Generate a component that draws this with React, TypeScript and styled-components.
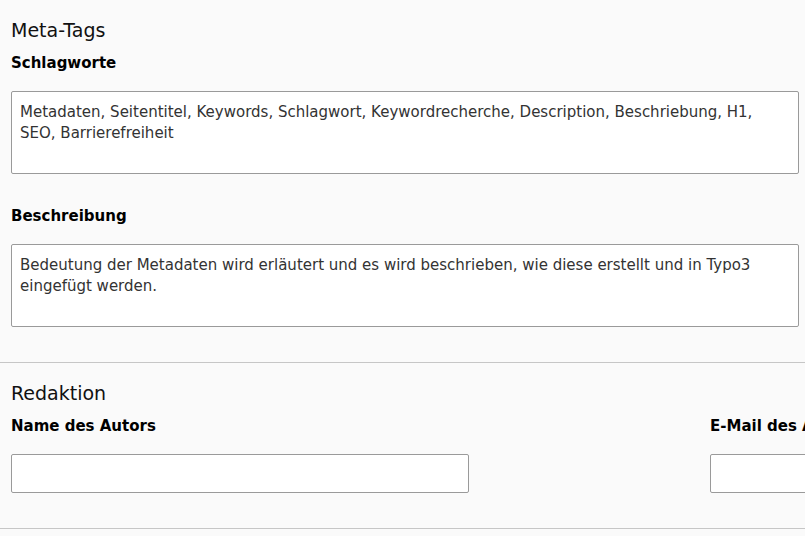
import React from 'react';
import styled, { createGlobalStyle } from 'styled-components';

const GlobalStyle = createGlobalStyle`
  html, body {
    margin: 0;
    padding: 0;
    background: #fafafa;
    overflow: hidden;
  }
  body {
    font-family: 'DejaVu Sans', Verdana, sans-serif;
    color: #000;
  }
`;

const Page = styled.div`
  width: 805px;
  height: 536px;
  background: #fafafa;
  overflow: hidden;
`;

const Section = styled.section`
  display: flex;
  flex-direction: column;
  padding: 19px 0 35px 11px;
  border-bottom: 1px solid #c6c6c6;
`;

const SectionTitle = styled.h2`
  margin: 0 0 12px 0;
  font-size: 19px;
  line-height: 22px;
  font-weight: 400;
  color: #111;
`;

const FieldList = styled.div`
  display: flex;
  flex-direction: column;
  gap: 32px;
`;

const FieldRow = styled.div`
  display: flex;
  flex-wrap: nowrap;
`;

const Field = styled.div<{ $width?: number }>`
  display: flex;
  flex-direction: column;
  flex-shrink: 0;
  width: ${(p) => (p.$width ? `${p.$width}px` : 'auto')};
`;

const Label = styled.label`
  display: block;
  margin-bottom: 17px;
  font-size: 15px;
  line-height: 21px;
  font-weight: 700;
  color: #000;
  white-space: nowrap;
`;

const TextArea = styled.textarea`
  box-sizing: border-box;
  width: 788px;
  height: 83px;
  padding: 10px 8px 8px 8px;
  margin: 0;
  font-family: 'DejaVu Sans', Verdana, sans-serif;
  font-size: 15px;
  line-height: 1.42857;
  color: #333;
  background: #fff;
  border: 1px solid #9a9a9a;
  border-radius: 2px;
  resize: none;
  overflow: hidden;
  outline: none;
`;

const TextInput = styled.input<{ $width: number }>`
  box-sizing: border-box;
  width: ${(p) => p.$width}px;
  height: 39px;
  padding: 6px 8px;
  margin: 0;
  font-family: 'DejaVu Sans', Verdana, sans-serif;
  font-size: 15px;
  color: #333;
  background: #fff;
  border: 1px solid #9a9a9a;
  border-radius: 2px;
  outline: none;
`;

export default function App() {
  return (
    <>
      <GlobalStyle />
      <Page>
        <Section>
          <SectionTitle>Meta-Tags</SectionTitle>
          <FieldList>
            <Field>
              <Label>Schlagworte</Label>
              <TextArea
                defaultValue="Metadaten, Seitentitel, Keywords, Schlagwort, Keywordrecherche, Description, Beschriebung, H1, SEO, Barrierefreiheit"
              />
            </Field>
            <Field>
              <Label>Beschreibung</Label>
              <TextArea
                defaultValue="Bedeutung der Metadaten wird erläutert und es wird beschrieben, wie diese erstellt und in Typo3 eingefügt werden."
              />
            </Field>
          </FieldList>
        </Section>
        <Section>
          <SectionTitle>Redaktion</SectionTitle>
          <FieldRow>
            <Field $width={699}>
              <Label>Name des Autors</Label>
              <TextInput $width={458} type="text" />
            </Field>
            <Field $width={458}>
              <Label>E-Mail des Autors</Label>
              <TextInput $width={458} type="text" />
            </Field>
          </FieldRow>
        </Section>
      </Page>
    </>
  );
}
